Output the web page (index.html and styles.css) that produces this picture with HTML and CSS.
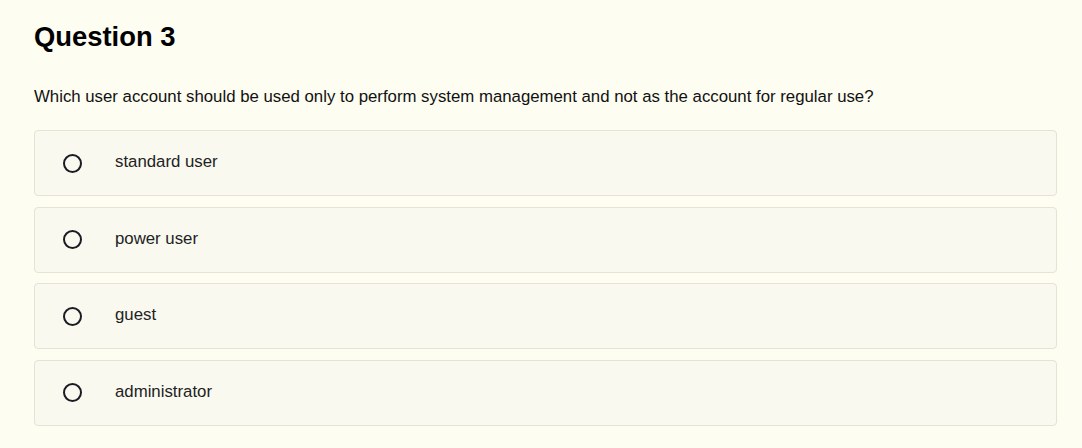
FILE: index.html
```html
<!DOCTYPE html>
<html>
<head>
<meta charset="utf-8">
<link rel="stylesheet" href="styles.css">
</head>
<body>
<main class="quiz">
  <h1 class="title">Question 3</h1>
  <p class="question">Which user account should be used only to perform system management and not as the account for regular use?</p>
  <ul class="options">
    <li class="option"><span class="radio"></span><span class="label">standard user</span></li>
    <li class="option"><span class="radio"></span><span class="label">power user</span></li>
    <li class="option"><span class="radio"></span><span class="label">guest</span></li>
    <li class="option"><span class="radio"></span><span class="label">administrator</span></li>
  </ul>
</main>
</body>
</html>
```

FILE: styles.css
```css
html, body {
  margin: 0;
  padding: 0;
  background: #fefdf1;
}
body {
  font-family: "Liberation Sans", Arial, sans-serif;
  color: #1a1a1a;
}
.quiz {
  padding: 21px 0 0 34px;
  width: 1023px;
}
.title {
  margin: 0;
  font-size: 27.4px;
  line-height: 32px;
  font-weight: bold;
  color: #000;
}
.question {
  margin: 33px 0 0 0;
  font-size: 16.8px;
  line-height: 22px;
  color: #111;
}
.options {
  list-style: none;
  margin: 22px 0 0 0;
  padding: 0;
  display: flex;
  flex-direction: column;
  gap: 10.67px;
}
.option {
  display: flex;
  align-items: center;
  height: 66px;
  box-sizing: border-box;
  border: 1px solid #e6e3d3;
  border-radius: 4px;
  background: #faf9f0;
  padding-left: 28px;
}
.radio {
  width: 15px;
  height: 15px;
  border: 2px solid #1b1b24;
  border-radius: 50%;
  flex: none;
}
.label {
  margin-left: 33px;
  margin-bottom: 2px;
  font-size: 16.8px;
  color: #222;
}
```
